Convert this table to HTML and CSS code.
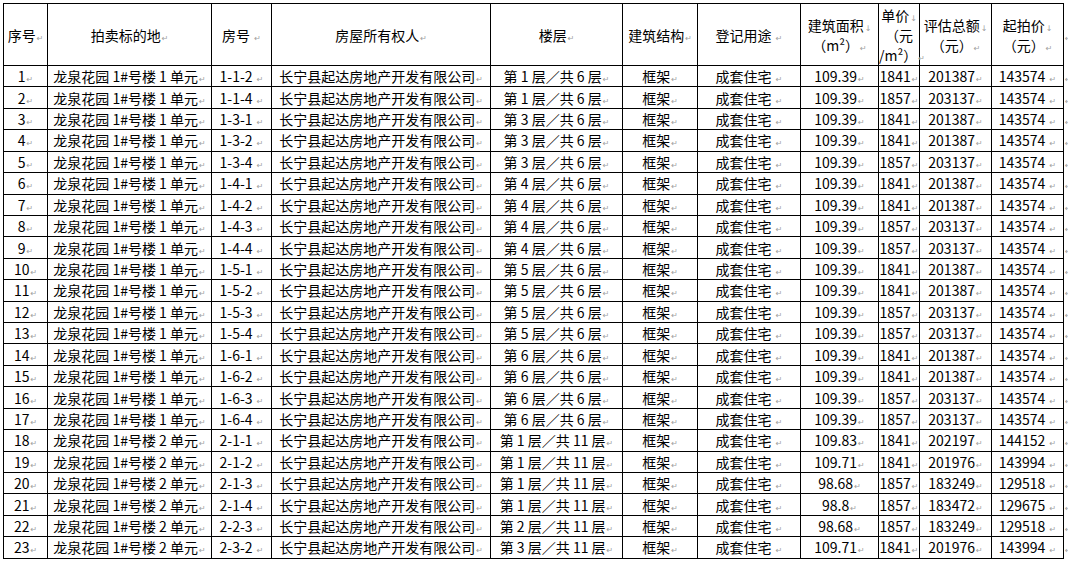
FILE: index.html
```html
<!DOCTYPE html>
<html lang="zh-CN">
<head>
<meta charset="utf-8">
<title>拍卖标的清单</title>
<link rel="stylesheet" href="styles.css">
</head>
<body>
<table class="sheet">
<colgroup>
<col class="c-no"><col class="c-lot"><col class="c-room"><col class="c-owner"><col class="c-floor"><col class="c-struct"><col class="c-use"><col class="c-area"><col class="c-price"><col class="c-total"><col class="c-start"><col class="c-end">
</colgroup>
<thead>
<tr class="head">
<th>序号<span class="pm">↵</span></th>
<th>拍卖标的地<span class="pm">↵</span></th>
<th>房号 <span class="pm">↵</span></th>
<th>房屋所有权人<span class="pm">↵</span></th>
<th>楼层<span class="pm">↵</span></th>
<th>建筑结构<span class="pm">↵</span></th>
<th>登记用途 <span class="pm">↵</span></th>
<th>建筑面积<span class="lb">↓</span><br>（m²）<span class="pm">↵</span></th>
<th class="narrow">单价<span class="lb">↓</span><br>（元<br>/m²）<span class="pm">↵</span></th>
<th>评估总额<span class="lb">↓</span><br>（元）<span class="pm">↵</span></th>
<th>起拍价<span class="lb">↓</span><br>（元）<span class="pm">↵</span></th>
<th class="rowend"><span class="pm">↵</span></th>
</tr>
</thead>
<tbody id="rows"></tbody>
</table>
<script src="app.js"></script>
</body>
</html>
```
FILE: app.js
```js
var data = [
  [1,"1","1-1-2",1,6,"109.39","1841","201387","143574"],
  [2,"1","1-1-4",1,6,"109.39","1857","203137","143574"],
  [3,"1","1-3-1",3,6,"109.39","1841","201387","143574"],
  [4,"1","1-3-2",3,6,"109.39","1841","201387","143574"],
  [5,"1","1-3-4",3,6,"109.39","1857","203137","143574"],
  [6,"1","1-4-1",4,6,"109.39","1841","201387","143574"],
  [7,"1","1-4-2",4,6,"109.39","1841","201387","143574"],
  [8,"1","1-4-3",4,6,"109.39","1857","203137","143574"],
  [9,"1","1-4-4",4,6,"109.39","1857","203137","143574"],
  [10,"1","1-5-1",5,6,"109.39","1841","201387","143574"],
  [11,"1","1-5-2",5,6,"109.39","1841","201387","143574"],
  [12,"1","1-5-3",5,6,"109.39","1857","203137","143574"],
  [13,"1","1-5-4",5,6,"109.39","1857","203137","143574"],
  [14,"1","1-6-1",6,6,"109.39","1841","201387","143574"],
  [15,"1","1-6-2",6,6,"109.39","1841","201387","143574"],
  [16,"1","1-6-3",6,6,"109.39","1857","203137","143574"],
  [17,"1","1-6-4",6,6,"109.39","1857","203137","143574"],
  [18,"2","2-1-1",1,11,"109.83","1841","202197","144152"],
  [19,"2","2-1-2",1,11,"109.71","1841","201976","143994"],
  [20,"2","2-1-3",1,11,"98.68","1857","183249","129518"],
  [21,"2","2-1-4",1,11,"98.8","1857","183472","129675"],
  [22,"2","2-2-3",2,11,"98.68","1857","183249","129518"],
  [23,"2","2-3-2",3,11,"109.71","1841","201976","143994"]
];
var pm = '<span class="pm">↵</span>';
var html = '';
data.forEach(function (r) {
  html += '<tr>' +
    '<td>' + r[0] + pm + '</td>' +
    '<td>龙泉花园 1#号楼 ' + r[1] + ' 单元' + pm + '</td>' +
    '<td>' + r[2] + ' ' + pm + '</td>' +
    '<td>长宁县起达房地产开发有限公司' + pm + '</td>' +
    '<td>第 ' + r[3] + ' 层／共 ' + r[4] + ' 层' + pm + '</td>' +
    '<td>框架' + pm + '</td>' +
    '<td>成套住宅 ' + pm + '</td>' +
    '<td>' + r[5] + pm + '</td>' +
    '<td class="narrow">' + r[6] + pm + '</td>' +
    '<td>' + r[7] + pm + '</td>' +
    '<td>' + r[8] + ' ' + pm + '</td>' +
    '<td class="rowend">' + pm + '</td>' +
    '</tr>';
});
document.getElementById('rows').innerHTML = html;
```
FILE: styles.css
```css
html, body {
  margin: 0;
  padding: 0;
  background: #ffffff;
}
body {
  padding: 3px 0 0 3px;
  font-family: "Noto Sans CJK SC", "Noto Sans", sans-serif;
  font-size: 14px;
  color: #000000;
}
.sheet {
  border-collapse: collapse;
  table-layout: fixed;
  width: 1063px;
}
.c-no { width: 44px; }
.c-lot { width: 164px; }
.c-room { width: 60px; }
.c-owner { width: 219px; }
.c-floor { width: 132px; }
.c-struct { width: 75px; }
.c-use { width: 103px; }
.c-area { width: 78px; }
.c-price { width: 41px; }
.c-total { width: 72px; }
.c-start { width: 72px; }
.c-end { width: 8px; }
.sheet th,
.sheet td {
  border: 1px solid #000000;
  padding: 0 2px;
  text-align: center;
  vertical-align: middle;
  white-space: nowrap;
  overflow: visible;
  font-weight: normal;
  line-height: 18px;
}
.head th {
  height: 61px;
  line-height: 20px;
}
.sheet tbody tr {
  height: 21.43px;
}
.sheet tbody td {
  height: 20px;
}
.sheet .narrow {
  padding: 0;
}
.sheet .rowend {
  border: none;
  padding: 0;
  text-align: left;
}
.pm,
.lb {
  font-family: "DejaVu Sans", sans-serif;
  font-size: 8px;
  line-height: 0;
  color: #a0a0a0;
  margin-left: 1px;
}
```
